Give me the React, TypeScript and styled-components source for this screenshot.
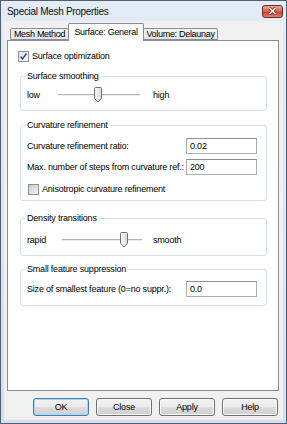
import * as React from 'react';
import styled, { createGlobalStyle } from 'styled-components';

const GlobalStyle = createGlobalStyle`
  html, body {
    margin: 0;
    padding: 0;
    background: #ffffff;
  }
  body {
    font-family: "Liberation Sans", Arial, sans-serif;
    font-size: 9px;
    color: #000;
  }
`;

const Window = styled.div`
  box-sizing: border-box;
  width: 287px;
  height: 424px;
  border: 1px solid #4d6075;
  background: linear-gradient(#e3ebf5, #d2dfee);
  padding: 0 3px 3px 3px;
  display: flex;
  flex-direction: column;
`;

const TitleBar = styled.div`
  height: 20px;
  display: flex;
  align-items: center;
  justify-content: space-between;
  padding-left: 3px;
`;

const Title = styled.span`
  font-size: 10px;
  letter-spacing: -0.3px;
  color: #101010;
`;

const CloseButton = styled.div`
  box-sizing: border-box;
  width: 21px;
  height: 13px;
  border: 1px solid #6e2c24;
  border-radius: 3px;
  background: linear-gradient(#eba798, #d9604f 50%, #c43a2c 51%, #e0806c);
  display: flex;
  align-items: center;
  justify-content: center;
`;

const Client = styled.div`
  flex: 1;
  background: #f0f0f0;
  padding: 2px 4px 4px 3px;
  display: flex;
  flex-direction: column;
`;

const TabRow = styled.div`
  display: flex;
  align-items: flex-end;
  height: 18px;
  padding-left: 3px;
  margin-bottom: -1px;
  position: relative;
  z-index: 1;
`;

const Tab = styled.div<{ $active?: boolean; $w: number }>`
  box-sizing: border-box;
  width: ${p => p.$w}px;
  height: ${p => (p.$active ? 18 : 12)}px;
  margin-bottom: ${p => (p.$active ? 0 : 1)}px;
  margin-left: -1px;
  border: 1px solid #898c95;
  border-bottom: ${p => (p.$active ? 'none' : '1px solid #898c95')};
  border-radius: 2px 2px 0 0;
  background: ${p => (p.$active ? '#ffffff' : 'linear-gradient(#f3f3f3, #e4e4e4)')};
  display: flex;
  align-items: ${p => (p.$active ? 'flex-start' : 'center')};
  justify-content: center;
  padding-top: ${p => (p.$active ? 3 : 0)}px;
  letter-spacing: -0.3px;
  white-space: nowrap;
  &:first-child {
    margin-left: 0;
  }
`;

const Panel = styled.div`
  flex: 1;
  border: 1px solid #898c95;
  background: #ffffff;
  padding: 9px 11px 0 10px;
  display: flex;
  flex-direction: column;
`;

const CheckRow = styled.label`
  display: flex;
  align-items: center;
  gap: 3px;
  height: 12px;
  letter-spacing: -0.2px;
`;

const Box = styled.span<{ $checked?: boolean }>`
  box-sizing: border-box;
  width: 11px;
  height: 11px;
  border: 1px solid #8e8f8f;
  background: ${p => (p.$checked ? 'linear-gradient(135deg, #e2e6ec, #fbfbfb)' : 'linear-gradient(135deg, #c9c9c9, #f4f4f4)')};
  display: flex;
  align-items: center;
  justify-content: center;
`;

const Group = styled.fieldset<{ $top: number; $pt: number; $pb: number }>`
  margin: ${p => p.$top}px 0 0 2px;
  padding: ${p => p.$pt}px 9px ${p => p.$pb}px 6px;
  border: 1px solid #d5dfe5;
  border-radius: 3px;
  display: flex;
  flex-direction: column;
`;

const Legend = styled.legend`
  padding: 0 2px;
  margin-left: -2px;
  line-height: 12px;
  letter-spacing: -0.2px;
`;

const SliderRow = styled.div<{ $label: number; $track: number; $gap: number }>`
  display: grid;
  grid-template-columns: ${p => p.$label}px ${p => p.$track}px auto;
  align-items: center;
  height: 16px;
  letter-spacing: -0.2px;
  & > span:last-child {
    padding-left: ${p => p.$gap}px;
  }
`;

const Track = styled.div`
  position: relative;
  height: 16px;
  display: flex;
  align-items: center;
  &::before {
    content: '';
    flex: 1;
    height: 1px;
    background: #b4b4b4;
    border-bottom: 1px solid #ececec;
  }
`;

const Thumb = styled.svg<{ $at: number }>`
  position: absolute;
  top: 0;
  left: ${p => p.$at}px;
`;

const FieldRow = styled.div<{ $mt: number }>`
  display: grid;
  grid-template-columns: 1fr 71px;
  align-items: center;
  height: 16px;
  margin-top: ${p => p.$mt}px;
  letter-spacing: -0.2px;
`;

const TextBox = styled.div`
  box-sizing: border-box;
  height: 16px;
  border: 1px solid #abadb3;
  border-top-color: #8a8f98;
  background: #fff;
  padding-left: 3px;
  display: flex;
  align-items: center;
`;

const CheckIndent = styled.div`
  margin: 8px 0 0 1px;
`;

const ButtonBar = styled.div`
  display: flex;
  justify-content: flex-end;
  gap: 7px;
  margin-top: 7px;
  padding-right: 1px;
`;

const Button = styled.div<{ $default?: boolean }>`
  box-sizing: border-box;
  width: 56px;
  height: 18px;
  border: 1px solid ${p => (p.$default ? '#3c7fb1' : '#707070')};
  border-radius: 3px;
  background: linear-gradient(#f2f2f2, #ebebeb 50%, #dddddd 51%, #cfcfcf);
  box-shadow: ${p => (p.$default ? 'inset 0 0 0 1px #a6d7f2' : 'inset 0 0 0 1px #fbfbfb')};
  display: flex;
  align-items: center;
  justify-content: center;
  letter-spacing: -0.2px;
`;

const SliderThumb: React.FC<{ at: number }> = ({ at }) => (
  <Thumb $at={at} width="10" height="16" viewBox="0 0 10 16">
    <defs>
      <linearGradient id="thumbFill" x1="0" x2="1" y1="0" y2="0">
        <stop offset="0" stopColor="#fafafa" />
        <stop offset="1" stopColor="#d9d9d9" />
      </linearGradient>
    </defs>
    <path d="M1.5 1.5 Q1.5 0.5 2.5 0.5 H7.5 Q8.5 0.5 8.5 1.5 V11.5 L5 15 L1.5 11.5 Z" fill="url(#thumbFill)" stroke="#707070" strokeWidth="1" />
  </Thumb>
);

const Check: React.FC<{ checked?: boolean; children: React.ReactNode }> = ({ checked, children }) => (
  <CheckRow>
    <Box $checked={checked}>
      {checked && (
        <svg width="9" height="9" viewBox="0 0 9 9">
          <path d="M1.5 4.5 L3.5 7 L7.5 1.5" fill="none" stroke="#3b5088" strokeWidth="1.6" />
        </svg>
      )}
    </Box>
    <span>{children}</span>
  </CheckRow>
);

const App: React.FC = () => {
  return (
    <>
      <GlobalStyle />
      <Window>
        <TitleBar>
          <Title>Special Mesh Properties</Title>
          <CloseButton>
            <svg width="9" height="8" viewBox="0 0 9 8">
              <path d="M1.5 1 L7.5 7 M7.5 1 L1.5 7" stroke="#5a1a14" strokeWidth="3" />
              <path d="M1.5 1 L7.5 7 M7.5 1 L1.5 7" stroke="#ffffff" strokeWidth="1.6" />
            </svg>
          </CloseButton>
        </TitleBar>
        <Client>
          <TabRow>
            <Tab $w={59}>Mesh Method</Tab>
            <Tab $w={76} $active>Surface: General</Tab>
            <Tab $w={75}>Volume: Delaunay</Tab>
          </TabRow>
          <Panel>
            <Check checked>Surface optimization</Check>

            <Group $top={8} $pt={5} $pb={7}>
              <Legend>Surface smoothing</Legend>
              <SliderRow $label={31} $track={82} $gap={13}>
                <span>low</span>
                <Track>
                  <SliderThumb at={35} />
                </Track>
                <span>high</span>
              </SliderRow>
            </Group>

            <Group $top={8} $pt={7} $pb={5}>
              <Legend>Curvature refinement</Legend>
              <FieldRow $mt={0}>
                <span>Curvature refinement ratio:</span>
                <TextBox>0.02</TextBox>
              </FieldRow>
              <FieldRow $mt={5}>
                <span>Max. number of steps from curvature ref.:</span>
                <TextBox>200</TextBox>
              </FieldRow>
              <CheckIndent>
                <Check>Anisotropic curvature refinement</Check>
              </CheckIndent>
            </Group>

            <Group $top={11} $pt={8} $pb={7}>
              <Legend>Density transitions</Legend>
              <SliderRow $label={35} $track={80} $gap={11}>
                <span>rapid</span>
                <Track>
                  <SliderThumb at={57} />
                </Track>
                <span>smooth</span>
              </SliderRow>
            </Group>

            <Group $top={7} $pt={6} $pb={8}>
              <Legend>Small feature suppression</Legend>
              <FieldRow $mt={0}>
                <span>Size of smallest feature (0=no suppr.):</span>
                <TextBox>0.0</TextBox>
              </FieldRow>
            </Group>
          </Panel>
          <ButtonBar>
            <Button $default>OK</Button>
            <Button>Close</Button>
            <Button>Apply</Button>
            <Button>Help</Button>
          </ButtonBar>
        </Client>
      </Window>
    </>
  );
};

export default App;
